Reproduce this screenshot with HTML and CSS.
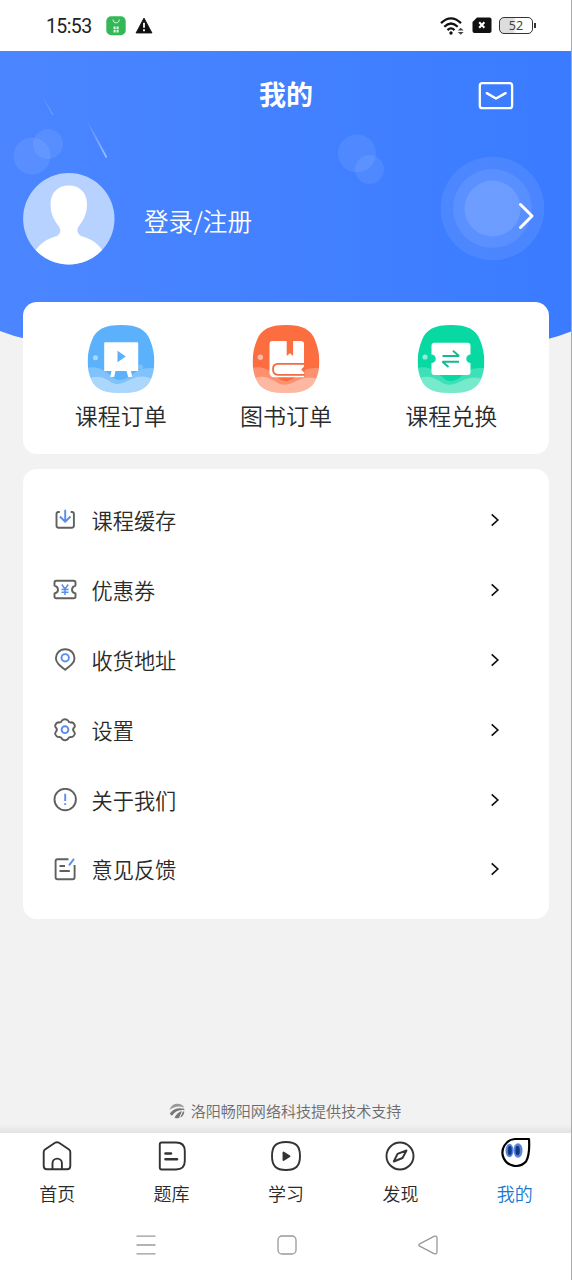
FILE: index.html
```html
<!DOCTYPE html>
<html lang="zh-CN">
<head>
<meta charset="utf-8">
<title>我的</title>
<link rel="stylesheet" href="styles.css">
</head>
<body>
<div class="screen">
  <header class="status">
    <span class="time">15:53</span>
    <svg class="app" width="20" height="20" viewBox="0 0 20 20"><rect x=".3" y=".2" width="19.4" height="19" rx="5" fill="#34b857"/><path d="M7 3.5C7.300 8 13 8 13.300 3.500" fill="none" stroke="#d8f5df" stroke-width="1"/><path d="M8.600 10.500v6M11.600 10.500v6" stroke="#e6faea" stroke-width="2" stroke-dasharray="2.600 .7"/></svg>
    <svg class="warn" width="18" height="17" viewBox="0 0 18 17"><path d="M9 1 17 16H1Z" fill="#111" stroke="#111" stroke-width=".8" stroke-linejoin="round"/><path d="M9 5.800v5M9 12.300v2" stroke="#fff" stroke-width="1.800"/></svg>
    <div class="signals">
      <svg width="24" height="18" viewBox="0 0 24 18"><g fill="none" stroke="#111" stroke-width="2.300"><path d="M1 6.200Q11-3.500 21 6.200"/><path d="M4.300 9.800Q11 3.200 17.700 9.800"/><path d="M7.500 13.100Q11 9.700 14.500 13.100"/></g><circle cx="11" cy="16" r="1.700" fill="#111"/><path d="M17.800 13.500 20.700 10.800 23.600 13.500ZM17.800 15 20.700 17.700 23.600 15Z" fill="#444"/></svg>
      <svg width="20" height="17" viewBox="0 0 20 17"><path d="M5 .5H17.500Q19.500.5 19.500 2.500V14Q19.500 16 17.500 16H2.500Q.5 16 .5 14V5Z" fill="#111"/><path d="m7.200 5.200 5.200 5.600m0-5.600-5.200 5.600" stroke="#fff" stroke-width="2"/></svg>
      <div class="battery"><span>52</span></div>
    </div>
  </header>

  <main class="page">
    <svg class="sky" width="572" height="298" viewBox="0 51 572 298">
      <defs>
        <linearGradient id="sky" x1="0" x2="1" y1="0" y2="0"><stop offset="0" stop-color="#4b86ff"/><stop offset="1" stop-color="#3a7bff"/></linearGradient>
        <linearGradient id="trail" x1="0" y1="0" x2="1" y2="1"><stop offset="0" stop-color="#fff" stop-opacity="0"/><stop offset="1" stop-color="#fff" stop-opacity=".5"/></linearGradient>
      </defs>
      <path d="M0 51H572V331Q550 340 522 344H60Q25 341 0 331Z" fill="url(#sky)"/>
      <g fill="#fff" fill-opacity=".08"><circle cx="32" cy="156" r="18.500"/><circle cx="48" cy="144" r="15"/><circle cx="357" cy="153.500" r="19"/><circle cx="369.500" cy="169.500" r="14.500"/><circle cx="492.500" cy="208.500" r="51.800"/><circle cx="492.500" cy="208.500" r="39.500"/></g>
      <circle cx="492.500" cy="208.500" r="28" fill="#fff" fill-opacity=".12"/>
      <path d="M42 96 53 115" stroke="url(#trail)" opacity=".6"/><path d="M87 121 106.500 157.500" stroke="url(#trail)" stroke-width="1.600"/>
    </svg>

    <div class="titlebar">
      <h1>我的</h1>
      <svg class="mail" width="36" height="29" viewBox="0 0 36 29"><rect x="1.800" y="2.200" width="32.300" height="25" rx="2.500" fill="none" stroke="#fff" stroke-width="2.300"/><path d="M8.800 12.200 18 17.500 27.600 12.200" fill="none" stroke="#fff" stroke-width="2.500" stroke-linecap="round" stroke-linejoin="round"/></svg>
    </div>

    <div class="profile">
      <svg width="92" height="92" viewBox="0 0 92 92"><defs><clipPath id="face"><circle cx="45.800" cy="45.800" r="45.700"/></clipPath></defs><g clip-path="url(#face)"><path d="M0 0H92V92H0Z" fill="#b8d2ff"/><path d="M45.800 12.500C57 12.500 64 20 64 31C64 43 59 49 55.500 53.500C53.500 57 54 60.500 58 63C69 66 76 71 81 80V92H11V80C16 71 23 66 34 63C38 60.500 38 57 36 53.500C32.500 49 27.600 43 27.600 31C27.600 20 34.500 12.500 45.800 12.500Z" fill="#fff"/></g></svg>
      <span class="login">登录/注册</span>
      <svg class="go" width="18" height="30" viewBox="0 0 18 30"><path d="M3.500 3.500 15 15 3.500 26.500" fill="none" stroke="#fff" stroke-width="3" stroke-linecap="round" stroke-linejoin="round"/></svg>
    </div>

    <section class="card orders">
      <div class="order">
        <svg width="68" height="68" viewBox="0 0 67 68"><defs><clipPath id="tile"><path d="M33.500 0C50 0 58.500 4.500 62.500 15C68 28 68.300 43 63.500 54C59.500 64 51 68 33.500 68S7.500 64 3.500 54C-1.300 43-1 28 4.500 15C8.500 4.500 17 0 33.500 0Z"/></clipPath></defs><g clip-path="url(#tile)"><path d="M-1 0H68V68H-1Z" fill="#5bb1fb"/><g fill="#fff"><path fill-opacity=".22" d="M-1 43C12 40 18 46 26 53C34 58 42 52 48 47C54 43 60 43 68 43V68H-1Z"/><path fill-opacity=".35" d="M-1 55C6 50 14 51 22 56C30 62 36 58 44 54C52 50 60 51 68 56V68H-1Z"/><circle cx="8" cy="32.700" r="2.500" fill-opacity=".5"/><circle cx="53" cy="42" r="2.500" fill-opacity=".2"/></g></g><path d="M17.700 17.300H49.700Q50.700 17.300 50.700 18.300V46H43.500L44.700 52H40.700L39 46H28L26.700 52H22.700L24 46H16.700V18.300Q16.700 17.300 17.700 17.300Z" fill="#fff"/><path d="M30 25.700V37.300L38.300 31.500Z" fill="#5bb1fb"/></svg>
        <span>课程订单</span>
      </div>
      <div class="order">
        <svg width="68" height="68" viewBox="0 0 67 68"><g clip-path="url(#tile)"><path d="M-1 0H68V68H-1Z" fill="#fc6d3f"/><g fill="#fff"><path fill-opacity=".25" d="M-1 43C12 40 18 46 26 53C34 60 42 54 48 47C54 43 60 43 68 43V68H-1Z"/><path fill-opacity=".35" d="M-1 55C6 50 14 51 22 56C30 62 36 60 44 56C52 52 60 51 68 56V68H-1Z"/><circle cx="7.800" cy="32.300" r="2.700" fill-opacity=".55"/></g></g><path d="M20 16H48.500Q51.500 16 51.500 19V52.300H22Q17 52.300 17 47V19Q17 16 20 16Z" fill="#fff"/><path d="M34.200 16H40.600V31L37.400 28.300 34.200 31Z" fill="#fc6d3f"/><path d="M52 38.900H25.500Q20.500 38.900 20.500 44.300T25.500 49.800H52M52 42.500 50 44.500 52 46.500" fill="none" stroke="#f26a43" stroke-width="1.800"/></svg>
        <span>图书订单</span>
      </div>
      <div class="order">
        <svg width="68" height="68" viewBox="0 0 67 68"><g clip-path="url(#tile)"><path d="M-1 0H68V68H-1Z" fill="#08d9a3"/><g fill="#fff"><path fill-opacity=".22" d="M-1 43C12 40 18 46 26 53C34 60 42 54 48 47C54 43 60 43 68 43V68H-1Z"/><path fill-opacity=".3" d="M-1 55C6 50 14 51 22 56C30 62 36 60 44 56C52 52 60 51 68 56V68H-1Z"/><circle cx="7.500" cy="32" r="2.600" fill-opacity=".55"/></g></g><path d="M17 17.700H50Q53 17.700 53 20.700V29.500A4.200 4.200 0 0 0 53 38V47Q53 50 50 50H17Q14 50 14 47V38A4.200 4.200 0 0 0 14 29.500V20.700Q14 17.700 17 17.700Z" fill="#fff"/><path d="M25 31H41.500L35.500 25.800M41.500 36.800H25L31 42" fill="none" stroke="#18b98e" stroke-width="1.900" stroke-linejoin="bevel"/></svg>
        <span>课程兑换</span>
      </div>
    </section>

    <section class="card menu">
      <div class="row"><svg class="ico" viewBox="0 0 24 24"><path d="M6.800 4H5.500Q3.500 4 3.500 6V17.500Q3.500 19.700 5.700 19.700H18.700Q20.900 19.700 20.900 17.500V6Q20.900 4 18.900 4H17.700"/><path class="hl" d="M12.200 1.800V13.500M6.900 8.500 12.200 13.700 17.500 8.500"/></svg><span>课程缓存</span><svg class="chev" viewBox="0 0 10 14"><path d="M1.700 1.300 7.800 7 1.700 12.700"/></svg></div>
      <div class="row"><svg class="ico" viewBox="0 0 24 24"><path d="M3.200 2.800H20.700Q22.500 2.800 22.500 4.700V7.700Q19 8.700 19 11.700T22.500 15.500V18.500Q22.500 20.300 20.700 20.300H3.200Q1.500 20.300 1.500 18.500V15.500Q5 14.700 5 11.700T1.500 7.700V4.700Q1.500 2.800 3.200 2.800Z"/><path class="hl" d="M8.800 6.500 12 11 15.200 6.500M12 11V17M8.500 11.500H15.500M8.500 14.200H15.500" stroke-width="1.500"/></svg><span>优惠券</span><svg class="chev" viewBox="0 0 10 14"><path d="M1.700 1.300 7.800 7 1.700 12.700"/></svg></div>
      <div class="row"><svg class="ico" viewBox="0 0 24 24"><path d="M12.200 1.300C18 1.300 21.500 5.500 21.500 10.200C21.500 14.800 17.500 17.700 12.200 21.800C7 17.700 2.900 14.800 2.900 10.200C2.900 5.500 6.500 1.300 12.200 1.300Z"/><circle class="hl" cx="12.200" cy="9.800" r="3.700"/></svg><span>收货地址</span><svg class="chev" viewBox="0 0 10 14"><path d="M1.700 1.300 7.800 7 1.700 12.700"/></svg></div>
      <div class="row"><svg class="ico" viewBox="0 0 24 24"><path d="M9 2.500Q10 1.200 12 1.200T15 2.500Q15.800 5 18.800 4.300Q20.600 4.700 21.700 7Q22.300 8.700 21 9.700Q19.200 11.700 21 13.700Q22.300 14.700 21.700 16.400Q20.600 18.700 18.800 19.100Q15.800 18.400 15 20.900Q14 22.200 12 22.200T9 20.900Q8.200 18.400 5.200 19.100Q3.400 18.700 2.300 16.400Q1.700 14.700 3 13.700Q4.800 11.700 3 9.700Q1.700 8.700 2.300 7Q3.400 4.700 5.200 4.300Q8.200 5 9 2.500Z"/><circle class="hl" cx="12" cy="11.700" r="3.400"/></svg><span>设置</span><svg class="chev" viewBox="0 0 10 14"><path d="M1.700 1.300 7.800 7 1.700 12.700"/></svg></div>
      <div class="row"><svg class="ico" viewBox="0 0 24 24"><circle cx="12.200" cy="11.500" r="10.700"/><path class="hl" d="M12.200 5.800V13M12.200 15.200V17"/></svg><span>关于我们</span><svg class="chev" viewBox="0 0 10 14"><path d="M1.700 1.300 7.800 7 1.700 12.700"/></svg></div>
      <div class="row"><svg class="ico" viewBox="0 0 24 24"><path d="M15.500 2.300H4.500Q2.600 2.300 2.600 4.200V20.300Q2.600 22.200 4.500 22.200H19.700Q21.600 22.200 21.600 20.300V8M6.500 9H12M6.500 14H16.800"/><path class="hl" d="M16 8.300 21 1.800"/></svg><span>意见反馈</span><svg class="chev" viewBox="0 0 10 14"><path d="M1.700 1.300 7.800 7 1.700 12.700"/></svg></div>
    </section>

    <footer class="support">
      <svg width="16" height="16" viewBox="0 0 16 16"><path d="M.5 7C2 2.500 5 .7 8.500.7 12 .7 14.500 2.500 15 4.500 10 2.500 5 3.500.5 7Z" fill="#999"/><path d="M.8 10.500C4 6 9 4.200 15.300 5.700V7.300C10 6.300 6 8.500 3 12.800 2 12.300 1.300 11.500.8 10.500Z" fill="#777"/><path d="M5.500 14.700C7 11.500 9.500 9 13 8L10 15C8.500 15.400 7 15.300 5.500 14.700ZM11.200 14.500 14 8.500H15.300C15.300 11.500 13.500 13.700 11.200 14.500Z" fill="#777"/></svg>
      <span>洛阳畅阳网络科技提供技术支持</span>
    </footer>
  </main>

  <nav class="tabs">
    <div class="tab"><svg viewBox="0 0 32 32"><path d="M14 2.800Q16 1.600 18 2.800L28 9.500Q29.300 10.500 29.300 12V26Q29.300 29.300 26 29.300H6Q2.700 29.300 2.700 26V12Q2.700 10.500 4 9.500ZM11.500 29V23.300A4.700 4.700 0 0 1 20.900 23.300V29"/></svg><span>首页</span></div>
    <div class="tab"><svg viewBox="0 0 32 32"><path d="M5.500 2.500H20Q28.800 2.500 28.800 11V21Q28.800 29.500 20 29.500H5.500Q3.800 29.500 3.800 27.800V4.200Q3.800 2.500 5.500 2.500Z"/><path stroke-width="2.600" d="M9.500 13.500H15M9.500 19.300H21"/></svg><span>题库</span></div>
    <div class="tab"><svg viewBox="0 0 32 32"><path d="M16 2C26 2 30 6 30 16S26 30 16 30 2 26 2 16 6 2 16 2Z"/><path d="M13.500 12.500V20L19.500 16.200Z" fill="#333"/></svg><span>学习</span></div>
    <div class="tab"><svg viewBox="0 0 32 32"><circle cx="16" cy="16" r="13.500"/><path d="M22.500 10.500 18.500 18 9.800 21.500 13.500 13.800Z"/></svg><span>发现</span></div>
    <div class="tab active"><svg viewBox="0 0 32 32"><path d="M16 2H30Q31 18 27 24.500A13.500 13.500 0 1 1 16 2Z" fill="#fff" stroke="#000" stroke-width="2.200"/><g stroke="none"><ellipse cx="10.500" cy="13.500" rx="4" ry="6.800" fill="#5a83df"/><ellipse cx="19" cy="13.500" rx="4.500" ry="7.300" fill="#5a83df"/><ellipse cx="10.800" cy="13.500" rx="2" ry="4.700" fill="#12397e"/><ellipse cx="18.600" cy="13.500" rx="2.200" ry="4.700" fill="#12397e"/></g></svg><span>我的</span></div>
  </nav>

  <div class="system">
    <svg viewBox="0 0 22 22"><path d="M1.500 2.200H20.500M1.500 11H20.500M1.500 19.800H20.500"/></svg>
    <svg viewBox="0 0 22 22"><rect x="2" y="2" width="18" height="18" rx="4"/></svg>
    <svg viewBox="0 0 22 22"><path d="M17.500 2.200 2.700 9.800Q.9 11 2.700 12.200L17.500 19.800Q19.800 20.500 20 18V4Q19.800 1.500 17.500 2.200Z"/></svg>
  </div>
</div>
</body>
</html>
```
FILE: styles.css
```css
* { box-sizing: border-box; }
body { margin: 0; background: #fff; }
.screen {
  width: 572px;
  height: 1280px;
  display: flex;
  flex-direction: column;
  border-right: 1px solid #aaa;
  overflow: hidden;
  color: #2a2a2a;
  font-family: "Noto Sans CJK SC", sans-serif;
  font-weight: 350;
}
svg { display: block; flex: none; }

.status {
  height: 51px;
  flex: none;
  display: flex;
  align-items: center;
  padding: 0 38px 0 46px;
  background: #fff;
}
.time { width: 60px; padding-top: 2px; color: #222; font: 19.500px/49px Roboto, sans-serif; letter-spacing: -.6px; }
.warn { margin-left: 9px; }
.signals { margin-left: auto; display: flex; align-items: center; gap: 7.500px; }
.battery {
  position: relative;
  width: 34px;
  height: 17px;
  border: 1.500px solid #333;
  border-radius: 5px;
  background: linear-gradient(90deg, #ddd 40%, #fff 52%);
  color: #444;
  font: 12.500px/15px "Noto Sans", sans-serif;
  text-align: center;
}
.battery::after {
  content: "";
  position: absolute;
  right: -4px;
  top: 5px;
  width: 2px;
  height: 5px;
  background: #333;
}

.page {
  position: relative;
  flex: 1;
  display: flex;
  flex-direction: column;
  padding: 0 22px 0 23px;
  background: linear-gradient(to bottom, transparent calc(100% - 9px), #e2e2e2) #f2f2f2;
}
.sky { position: absolute; left: 0; top: 0; }
.titlebar, .profile, .card, .support { position: relative; }
.titlebar {
  height: 86px;
  display: grid;
  grid-template-columns: 1fr auto 1fr;
  align-items: center;
}
.titlebar h1 {
  grid-column: 2;
  margin: 0;
  color: #fff;
  font-size: 27px;
  line-height: 40px;
  font-weight: 700;
}
.mail { justify-self: end; margin: 2px 35px 0 0; }

.profile {
  height: 92px;
  margin: 36px 0 37px;
  display: flex;
  align-items: center;
}
.login { margin-left: 29px; padding-top: 1px; color: #fff; font-size: 24.600px; line-height: 36px; }
.go { margin: -6px 14px 0 auto; }

.card { background: #fff; border-radius: 14px; }
.orders {
  height: 152px;
  padding: 23px 15px 0;
  display: grid;
  grid-template-columns: repeat(3, 1fr);
}
.order { display: flex; flex-direction: column; align-items: center; font-size: 23px; line-height: 34px; }
.order span { margin-top: 5px; }

.menu { height: 450px; margin-top: 15px; padding: 16px 49px 0 29.500px; }
.row { height: 69.900px; display: flex; align-items: center; font-size: 21.200px; line-height: 32px; }
.row span { margin-left: 15px; }
.ico { width: 24px; height: 24px; fill: none; stroke: #606060; stroke-width: 1.900; stroke-linejoin: round; }
.ico .hl { stroke: #5a8dee; }
.chev { width: 10px; height: 14px; margin-left: auto; fill: none; stroke: #111; stroke-width: 1.700; }

.support {
  margin: auto 2px 11px 0;
  display: flex;
  align-items: center;
  justify-content: center;
  gap: 6px;
  color: #6c6c6c;
  font-size: 15.050px;
  line-height: 22px;
}

.tabs { height: 78px; margin-right: -1px; flex: none; display: grid; grid-template-columns: repeat(5, 1fr); }
.tab { display: flex; flex-direction: column; align-items: center; padding-top: 7px; font-size: 18px; line-height: 26px; }
.tab svg { width: 32px; height: 32px; fill: none; stroke: #333; stroke-width: 1.900; stroke-linejoin: round; stroke-linecap: round; }
.tab span { margin-top: 8px; }
.active { color: #1976d2; }
.active svg { margin: -3px 0 3px; }

.system {
  height: 69px;
  flex: none;
  display: flex;
  justify-content: space-between;
  padding: 23px 132px 0 135px;
  background: #fff;
}
.system svg { width: 22px; height: 22px; fill: none; stroke: #999; stroke-width: 1.300; }
```
